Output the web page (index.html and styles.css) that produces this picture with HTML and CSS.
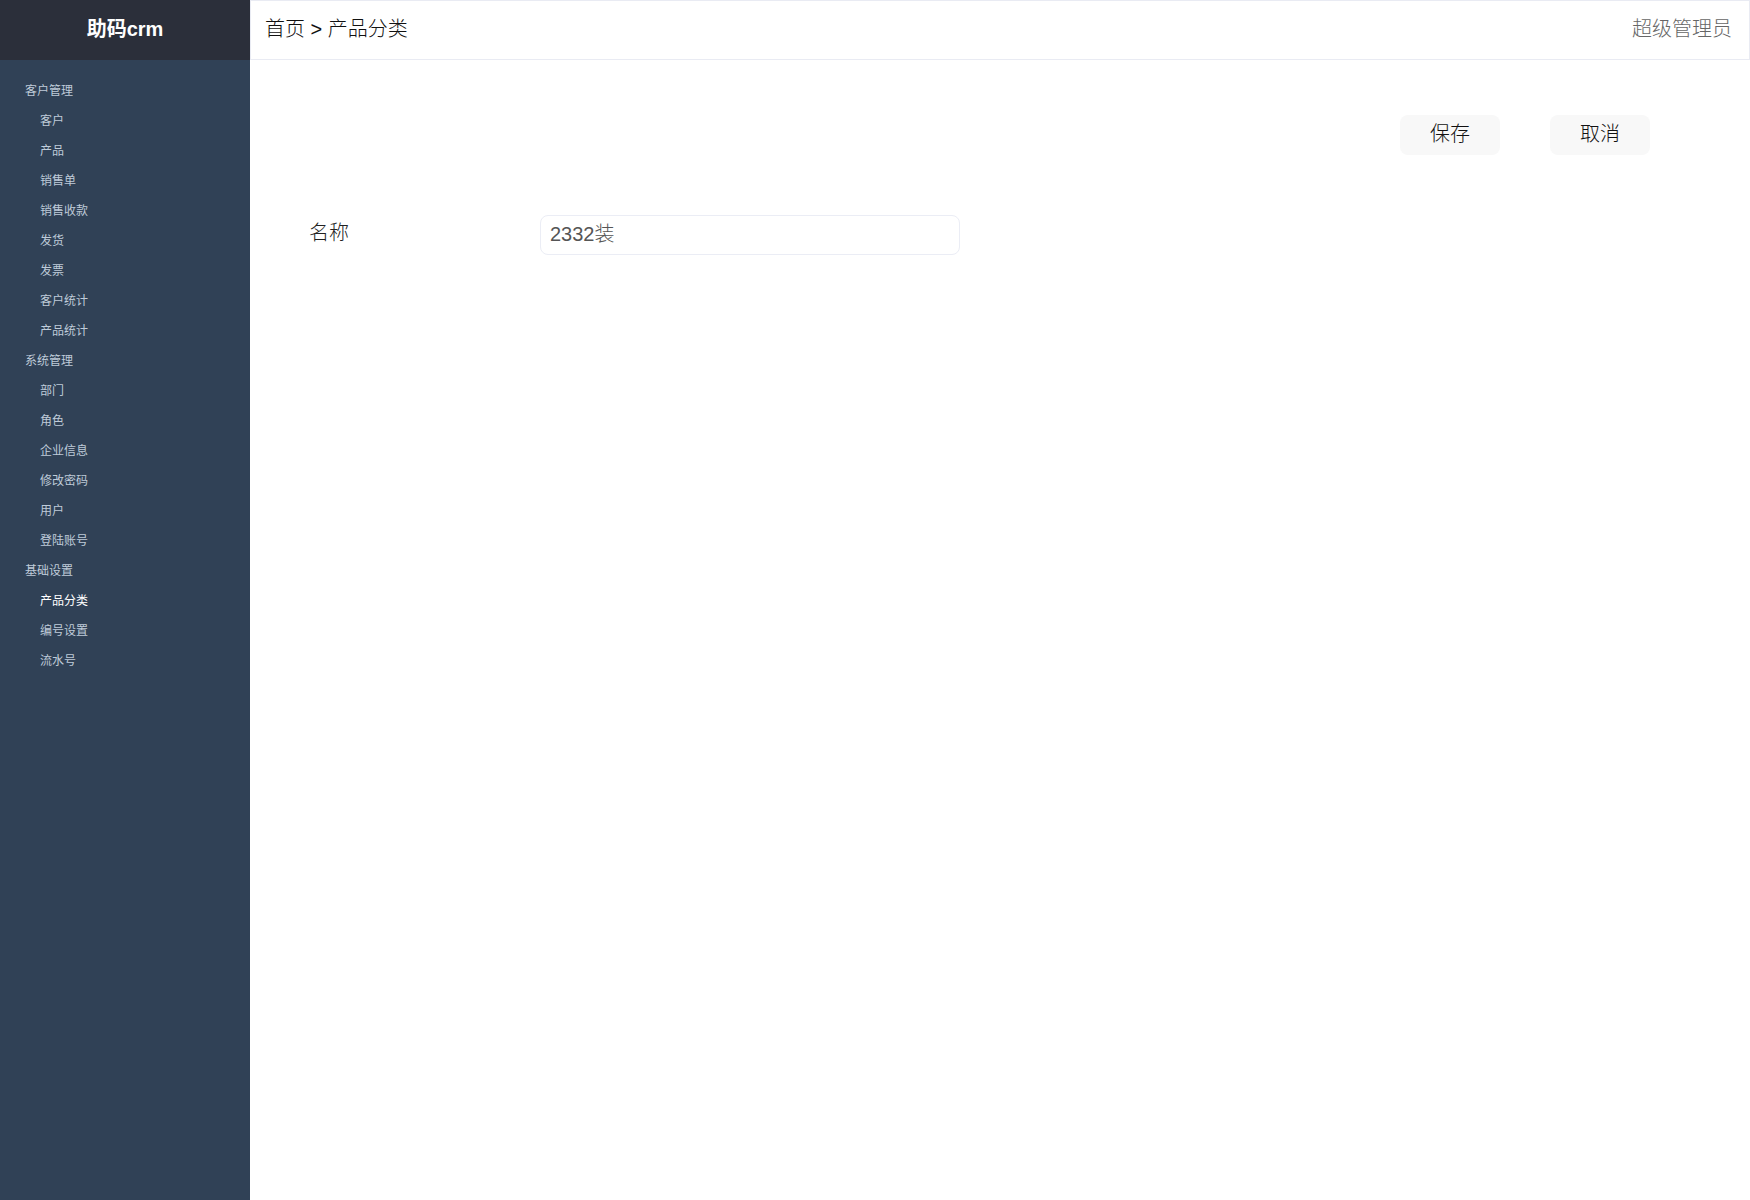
FILE: index.html
```html
<!DOCTYPE html>
<html lang="zh-CN">
<head>
  <meta charset="UTF-8">
  <title>助码crm - 产品分类</title>
  <link rel="stylesheet" href="styles.css">
</head>
<body>
  <div class="layout">
    <aside class="sidebar">
      <div class="logo">助码crm</div>
      <ul class="menu">
        <li class="group">客户管理</li>
        <li class="item">客户</li>
        <li class="item">产品</li>
        <li class="item">销售单</li>
        <li class="item">销售收款</li>
        <li class="item">发货</li>
        <li class="item">发票</li>
        <li class="item">客户统计</li>
        <li class="item">产品统计</li>
        <li class="group">系统管理</li>
        <li class="item">部门</li>
        <li class="item">角色</li>
        <li class="item">企业信息</li>
        <li class="item">修改密码</li>
        <li class="item">用户</li>
        <li class="item">登陆账号</li>
        <li class="group">基础设置</li>
        <li class="item active">产品分类</li>
        <li class="item">编号设置</li>
        <li class="item">流水号</li>
      </ul>
    </aside>

    <div class="main">
      <header class="topbar">
        <div class="crumbs">首页 &gt; 产品分类</div>
        <div class="user">超级管理员</div>
      </header>

      <section class="content">
        <div class="actions">
          <button class="btn">保存</button>
          <button class="btn">取消</button>
        </div>
        <form class="form">
          <div class="row">
            <label class="label" for="name">名称</label>
            <input class="field" id="name" type="text" value="2332装">
          </div>
        </form>
      </section>
    </div>
  </div>
</body>
</html>
```

FILE: styles.css
```css
* {
  box-sizing: border-box;
}
html, body {
  height: 100%;
}
body {
  margin: 0;
  font-family: "Microsoft YaHei", "Liberation Sans", "Noto Sans CJK SC", sans-serif;
  color: #222;
  background: #fff;
}
.layout {
  display: flex;
  min-height: 100vh;
}

/* left menu */
.sidebar {
  width: 250px;
  flex-shrink: 0;
  background: #304156;
}
.logo {
  height: 60px;
  background: #2b2f3a;
  color: #fff;
  font-size: 20px;
  font-weight: bold;
  display: flex;
  align-items: center;
  justify-content: center;
  padding-bottom: 6px;
}
.menu {
  list-style: none;
  margin: 0;
  padding: 16px 0 0;
}
.menu li {
  height: 30px;
  line-height: 30px;
  font-size: 12px;
  color: #bfcbd9;
  cursor: pointer;
}
.menu .group {
  padding-left: 25px;
}
.menu .item {
  padding-left: 40px;
}
.menu .active {
  color: #fff;
}

/* right side */
.main {
  flex: 1;
  display: flex;
  flex-direction: column;
}
.topbar {
  height: 60px;
  border: 1px solid #e9ebf3;
  display: flex;
  align-items: center;
  justify-content: space-between;
  padding: 0 17px 5px 14px;
}
.crumbs {
  font-size: 20px;
  font-weight: 300;
  color: #111;
}
.user {
  font-size: 20px;
  font-weight: 300;
  color: #666;
}
.content {
  padding: 55px 100px 0 59px;
}
.actions {
  display: flex;
  justify-content: flex-end;
  gap: 50px;
}
.btn {
  width: 100px;
  height: 40px;
  border: none;
  border-radius: 8px;
  background: #f8f8f8;
  font-family: inherit;
  font-size: 20px;
  font-weight: 300;
  color: #111;
  padding: 0 0 6px;
  cursor: pointer;
}
.form {
  margin-top: 60px;
}
.row {
  display: flex;
  align-items: center;
}
.label {
  width: 231px;
  font-size: 20px;
  font-weight: 300;
  color: #222;
  padding-bottom: 7px;
}
.field {
  width: 420px;
  height: 40px;
  border: 1px solid #ebedf5;
  border-radius: 8px;
  padding: 0 9px 6px;
  font-family: inherit;
  font-size: 20px;
  font-weight: 300;
  color: #555;
  outline: none;
}
```
